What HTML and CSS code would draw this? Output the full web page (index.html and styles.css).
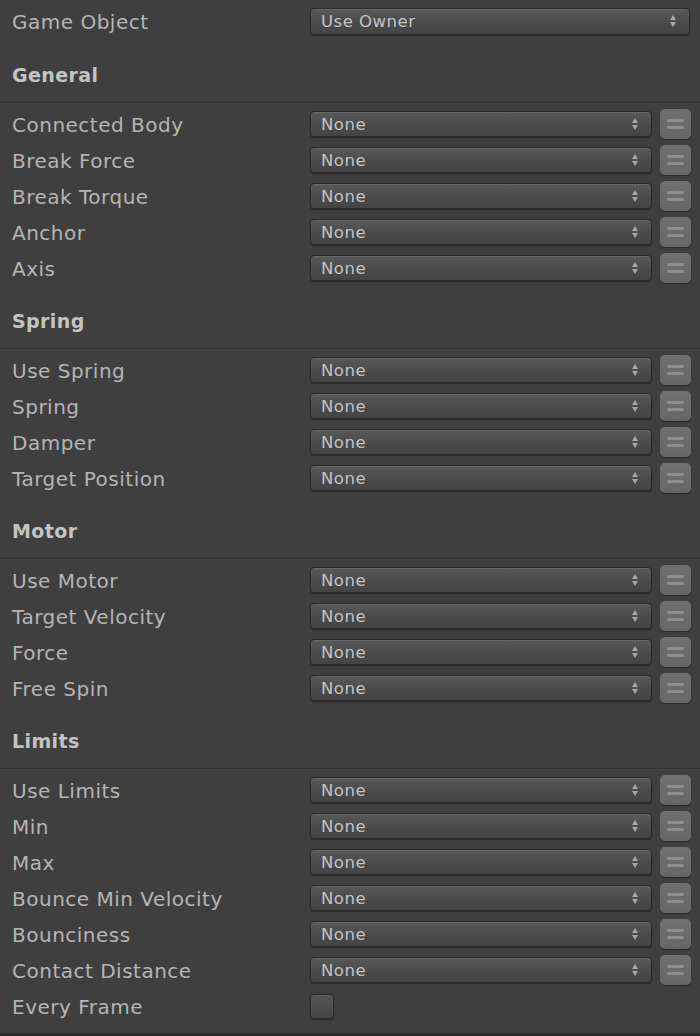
FILE: index.html
```html
<!DOCTYPE html>
<html>
<head>
<meta charset="utf-8">
<link rel="stylesheet" href="styles.css">
</head>
<body>
<div class="panel">
  <div class="row top-row">
    <span class="label">Game Object</span>
    <div class="select wide"><span>Use Owner</span><i class="arrows"></i></div>
  </div>

  <div class="header first">General</div>
  <div class="group">
    <div class="row"><span class="label">Connected Body</span><div class="select"><span>None</span><i class="arrows"></i></div><div class="btn"></div></div>
    <div class="row"><span class="label">Break Force</span><div class="select"><span>None</span><i class="arrows"></i></div><div class="btn"></div></div>
    <div class="row"><span class="label">Break Torque</span><div class="select"><span>None</span><i class="arrows"></i></div><div class="btn"></div></div>
    <div class="row"><span class="label">Anchor</span><div class="select"><span>None</span><i class="arrows"></i></div><div class="btn"></div></div>
    <div class="row"><span class="label">Axis</span><div class="select"><span>None</span><i class="arrows"></i></div><div class="btn"></div></div>
  </div>

  <div class="header">Spring</div>
  <div class="group">
    <div class="row"><span class="label">Use Spring</span><div class="select"><span>None</span><i class="arrows"></i></div><div class="btn"></div></div>
    <div class="row"><span class="label">Spring</span><div class="select"><span>None</span><i class="arrows"></i></div><div class="btn"></div></div>
    <div class="row"><span class="label">Damper</span><div class="select"><span>None</span><i class="arrows"></i></div><div class="btn"></div></div>
    <div class="row"><span class="label">Target Position</span><div class="select"><span>None</span><i class="arrows"></i></div><div class="btn"></div></div>
  </div>

  <div class="header">Motor</div>
  <div class="group">
    <div class="row"><span class="label">Use Motor</span><div class="select"><span>None</span><i class="arrows"></i></div><div class="btn"></div></div>
    <div class="row"><span class="label">Target Velocity</span><div class="select"><span>None</span><i class="arrows"></i></div><div class="btn"></div></div>
    <div class="row"><span class="label">Force</span><div class="select"><span>None</span><i class="arrows"></i></div><div class="btn"></div></div>
    <div class="row"><span class="label">Free Spin</span><div class="select"><span>None</span><i class="arrows"></i></div><div class="btn"></div></div>
  </div>

  <div class="header">Limits</div>
  <div class="group">
    <div class="row"><span class="label">Use Limits</span><div class="select"><span>None</span><i class="arrows"></i></div><div class="btn"></div></div>
    <div class="row"><span class="label">Min</span><div class="select"><span>None</span><i class="arrows"></i></div><div class="btn"></div></div>
    <div class="row"><span class="label">Max</span><div class="select"><span>None</span><i class="arrows"></i></div><div class="btn"></div></div>
    <div class="row"><span class="label">Bounce Min Velocity</span><div class="select"><span>None</span><i class="arrows"></i></div><div class="btn"></div></div>
    <div class="row"><span class="label">Bounciness</span><div class="select"><span>None</span><i class="arrows"></i></div><div class="btn"></div></div>
    <div class="row"><span class="label">Contact Distance</span><div class="select"><span>None</span><i class="arrows"></i></div><div class="btn"></div></div>
    <div class="row"><span class="label">Every Frame</span><div class="checkbox"></div></div>
  </div>
</div>
<div class="footer"></div>
</body>
</html>
```

FILE: styles.css
```css
html, body {
  margin: 0;
  padding: 0;
  background: #2c2c2c;
}
body {
  width: 700px;
  height: 1036px;
  overflow: hidden;
  font-family: "DejaVu Sans", "Liberation Sans", sans-serif;
}
.panel {
  background: #3f3f3f;
  height: 1033px;
  padding-top: 3px;
  box-sizing: border-box;
}
.row {
  height: 36px;
  display: flex;
  align-items: center;
  padding-left: 12px;
}
.label {
  width: 298px;
  flex: none;
  color: #b5b5b5;
  font-size: 20px;
  line-height: 24px;
  padding-top: 2px;
  letter-spacing: 0.5px;
  white-space: nowrap;
}
.header {
  height: 63px;
  box-sizing: border-box;
  padding-top: 23px;
  padding-left: 12px;
  color: #c4c4c4;
  font-size: 19px;
  font-weight: bold;
  letter-spacing: 0.4px;
  line-height: 24px;
  border-bottom: 1px solid #333333;
  box-shadow: 0 1px 0 #434343;
}
.header.first {
  height: 64px;
  padding-top: 24px;
}
.group {
  padding-top: 3px;
}
.select {
  position: relative;
  flex: none;
  width: 342px;
  height: 26px;
  box-sizing: border-box;
  border: 1px solid #2b2b2b;
  border-radius: 4px;
  background: linear-gradient(#5a5a5a, #4b4b4b 50%, #444444);
  box-shadow: inset 0 1px 0 #666666, 0 1px 1px rgba(0,0,0,0.35);
  display: flex;
  align-items: center;
  padding-left: 10px;
  padding-top: 1px;
  color: #c4c4c4;
  font-size: 16.5px;
  letter-spacing: 0.5px;
  line-height: 20px;
}
.select.wide {
  width: 380px;
  height: 27px;
}
.arrows {
  position: absolute;
  right: 13px;
  top: 50%;
  width: 6px;
  height: 12px;
  margin-top: -6px;
}
.arrows::before, .arrows::after {
  content: "";
  position: absolute;
  left: 0;
  width: 0;
  height: 0;
  border-left: 3px solid transparent;
  border-right: 3px solid transparent;
}
.arrows::before {
  top: 0;
  border-bottom: 5px solid #a8a8a8;
}
.arrows::after {
  bottom: 0;
  border-top: 5px solid #a8a8a8;
}
.btn {
  flex: none;
  width: 31px;
  height: 30px;
  margin-left: 8px;
  box-sizing: border-box;
  border-radius: 5px;
  background: linear-gradient(#707070, #676767);
  box-shadow: 0 1px 1px rgba(0,0,0,0.4);
  position: relative;
}
.btn::before, .btn::after {
  content: "";
  position: absolute;
  left: 7px;
  right: 7px;
  height: 3px;
  border-radius: 2px;
  background: #8e8e8e;
  filter: blur(0.6px);
}
.btn::before { top: 10px; }
.btn::after { top: 17px; }
.checkbox {
  flex: none;
  width: 24px;
  height: 25px;
  box-sizing: border-box;
  border: 1px solid #2b2b2b;
  border-radius: 4px;
  background: linear-gradient(#545454, #474747);
  box-shadow: inset 0 1px 0 #606060, 0 1px 1px rgba(0,0,0,0.35);
}
.footer {
  height: 3px;
  background: #2c2c2c;
}
```
